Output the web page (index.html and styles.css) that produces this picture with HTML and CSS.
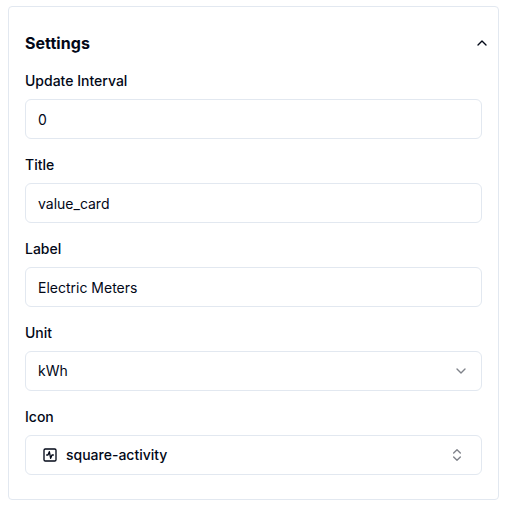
FILE: index.html
```html
<!DOCTYPE html>
<html lang="en">
<head>
<meta charset="utf-8">
<title>Settings</title>
<link rel="stylesheet" href="styles.css">
</head>
<body>
<section class="panel">
  <header class="panel-header">
    <h3>Settings</h3>
    <svg class="icon" viewBox="0 0 24 24"><path d="m18 15-6-6-6 6"/></svg>
  </header>
  <form class="fields">
    <div class="field"><label>Update Interval</label><div class="control input">0</div></div>
    <div class="field"><label>Title</label><div class="control input">value_card</div></div>
    <div class="field"><label>Label</label><div class="control input">Electric Meters</div></div>
    <div class="field"><label>Unit</label>
      <div class="control select"><span>kWh</span>
        <svg class="icon muted" viewBox="0 0 24 24"><path d="m6 9 6 6 6-6"/></svg>
      </div>
    </div>
    <div class="field"><label>Icon</label>
      <div class="control combo">
        <svg class="icon" viewBox="0 0 24 24"><rect width="18" height="18" x="3" y="3" rx="2"/><path d="M17 12h-2l-2 5-2-10-2 5H7"/></svg>
        <span>square-activity</span>
        <svg class="icon muted end" viewBox="0 0 24 24"><path d="m7 15 5 5 5-5"/><path d="m7 9 5-5 5 5"/></svg>
      </div>
    </div>
  </form>
</section>
</body>
</html>
```
FILE: styles.css
```css
* { box-sizing: border-box; }
body {
  margin: 0;
  padding: 6px 9px 0 8px;
  background: #fff;
  color: #020817;
  font-family: Inter, sans-serif;
  font-size: 14px;
  line-height: 20px;
}
.panel {
  height: 494px;
  padding: 24px 16px;
  border: 1px solid #e2e8f0;
  border-radius: 4px;
}
.panel-header {
  display: flex;
  align-items: center;
  justify-content: space-between;
  height: 24px;
  margin-right: -8px;
}
h3 { margin: 0; font-size: 16px; line-height: 24px; font-weight: 700; font-optical-sizing: none; letter-spacing: .05px; }
.fields { display: grid; gap: 16px; margin-top: 16px; }
.field { display: grid; gap: 11px; }
label { height: 17px; line-height: 14px; padding-top: 3px; font-weight: 500; }
.control {
  display: flex;
  align-items: center;
  height: 40px;
  padding: 0 12px;
  border: 1px solid #e2e8f0;
  border-radius: 6px;
}
.input { padding-top: 2px; }
.select { justify-content: space-between; }
.combo { padding: 0 16px; gap: 8px; font-weight: 500; }
.icon {
  width: 16px;
  height: 16px;
  flex: none;
  fill: none;
  stroke: currentColor;
  stroke-width: 2;
  stroke-linecap: round;
  stroke-linejoin: round;
}
.muted { opacity: .5; }
.end { margin-left: auto; }
```
